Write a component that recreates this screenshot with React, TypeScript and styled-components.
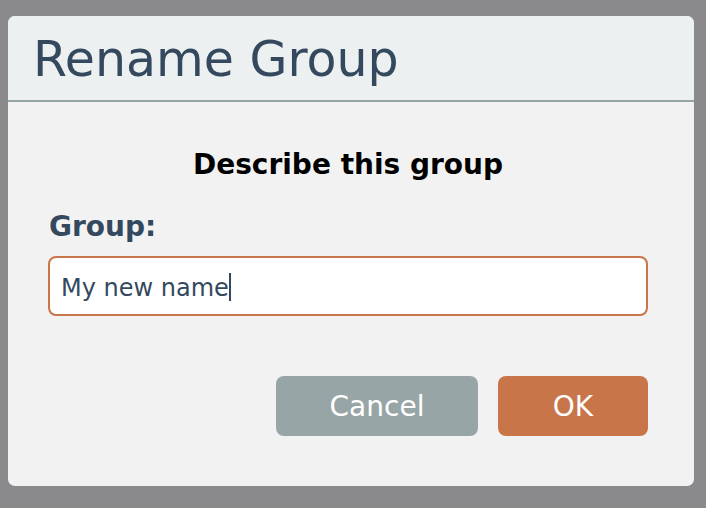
import React from "react";
import styled, { createGlobalStyle } from "styled-components";

const Global = createGlobalStyle`
  html, body { margin: 0; padding: 0; background: #8a8a8c; }
  body { font-family: "DejaVu Sans", Verdana, sans-serif; }
`;

const Page = styled.div`
  width: 706px;
  height: 508px;
  padding: 16px 12px 22px 8px;
  box-sizing: border-box;
  display: flex;
`;

const Dialog = styled.div`
  flex: 1;
  background: #f2f2f2;
  border-radius: 7px;
  overflow: hidden;
  display: flex;
  flex-direction: column;
`;

const Header = styled.div`
  height: 86px;
  background: #ecf0f1;
  border-bottom: 2px solid #95a5a6;
  display: flex;
  align-items: center;
  padding: 2px 0 0 25px;
  box-sizing: border-box;
  flex-shrink: 0;
`;

const Title = styled.h1`
  margin: 0;
  font-weight: normal;
  font-size: 49px;
  color: #34495e;
  line-height: 49px;
`;

const Body = styled.div`
  display: flex;
  flex-direction: column;
  padding: 46px 46px 0 40px;
`;

const Prompt = styled.div`
  font-weight: bold;
  font-size: 28px;
  color: #000;
  text-align: center;
  line-height: 34px;
`;

const Label = styled.label`
  margin-top: 28px;
  font-weight: bold;
  font-size: 28px;
  color: #34495e;
  line-height: 34px;
  padding-left: 1px;
`;

const Field = styled.div`
  margin-top: 12px;
  height: 56px;
  box-sizing: border-box;
  height: 60px;
  background: #fff;
  border: 2px solid #c87549;
  border-radius: 8px;
  display: flex;
  align-items: center;
  padding: 3px 0 0 11px;
  font-size: 24px;
  color: #34495e;
`;

const Caret = styled.span`
  display: inline-block;
  width: 2px;
  height: 28px;
  margin-top: -2px;
  background: #34495e;
`;

const Actions = styled.div`
  margin-top: 60px;
  display: flex;
  justify-content: flex-end;
  gap: 20px;
`;

const Button = styled.button<{ $variant: "cancel" | "ok" }>`
  height: 60px;
  width: ${(p) => (p.$variant === "ok" ? "150px" : "202px")};
  border: none;
  border-radius: 8px;
  background: ${(p) => (p.$variant === "ok" ? "#c87549" : "#98a5a6")};
  color: #fff;
  font-family: "DejaVu Sans", Verdana, sans-serif;
  font-size: 28px;
  padding: 0;
  cursor: pointer;
`;

export default function App() {
  return (
    <>
      <Global />
      <Page>
        <Dialog>
          <Header>
            <Title>Rename Group</Title>
          </Header>
          <Body>
            <Prompt>Describe this group</Prompt>
            <Label>Group:</Label>
            <Field>
              My new name
              <Caret />
            </Field>
            <Actions>
              <Button $variant="cancel">Cancel</Button>
              <Button $variant="ok">OK</Button>
            </Actions>
          </Body>
        </Dialog>
      </Page>
    </>
  );
}
